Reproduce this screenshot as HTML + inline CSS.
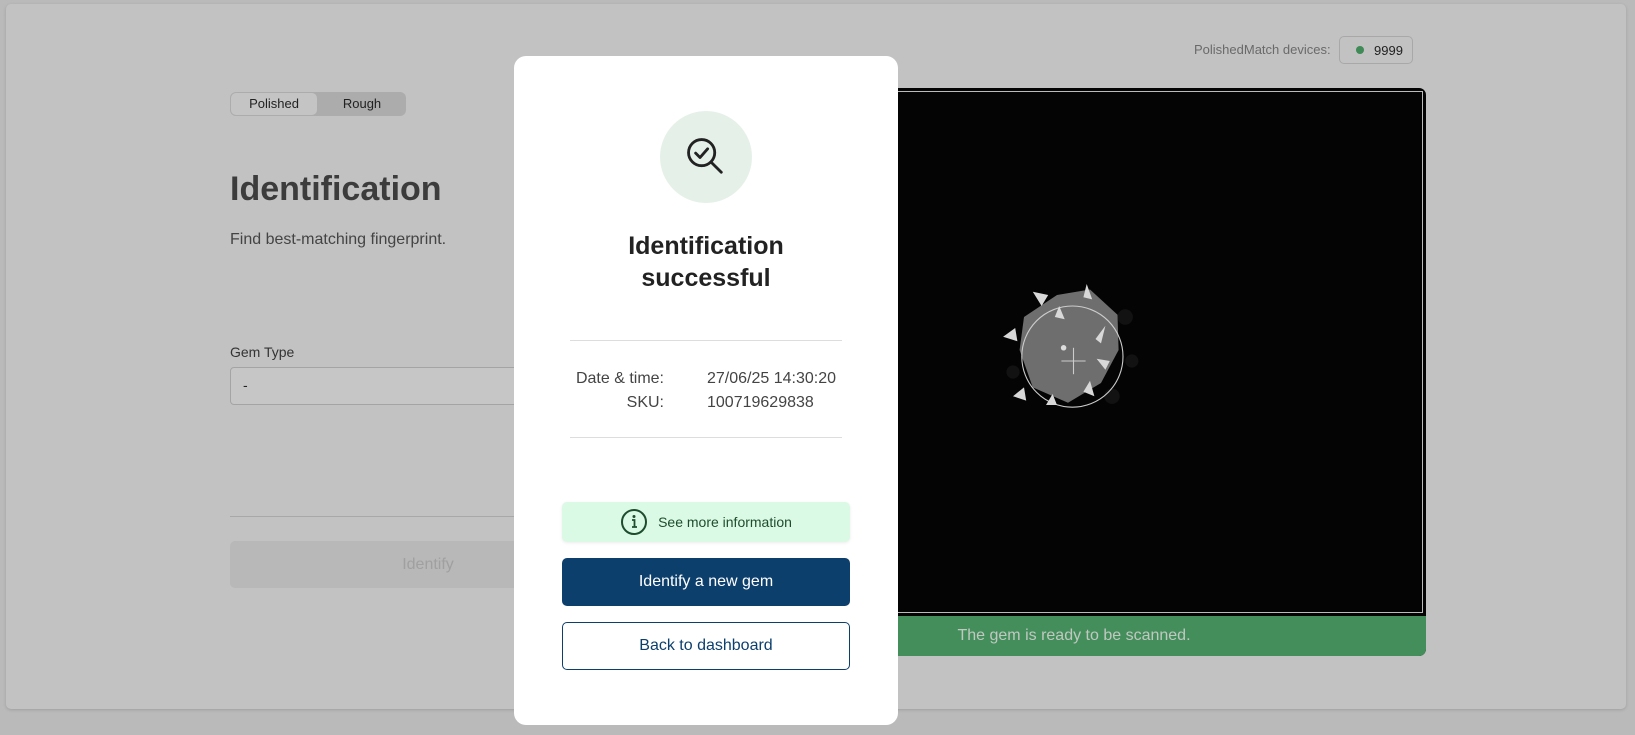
<!DOCTYPE html>
<html><head><meta charset="utf-8"><style>
*{box-sizing:border-box;margin:0;padding:0}
body{width:1635px;height:735px;background:#bababa;font-family:"Liberation Sans",sans-serif;position:relative;overflow:hidden}
.card{position:absolute;left:6px;top:4px;width:1620px;height:705px;background:#c2c2c2;border-radius:5px;box-shadow:0 1px 3px rgba(0,0,0,.15)}
.abs{position:absolute}
.modal{position:absolute;left:514px;top:56px;width:384px;height:669px;background:#fff;border-radius:12px}
.btn{position:absolute;left:48px;width:288px;border-radius:5px;display:flex;align-items:center;justify-content:center;font-size:16px}
</style></head><body>
<div class="card"></div>
<div class="abs" style="left:1194px;top:42px;font-size:13px;color:#6a6a6a">PolishedMatch devices:</div>
<div class="abs" style="left:1339px;top:36px;width:74px;height:28px;border:1px solid #a8a8a8;border-radius:5px;font-size:13px;color:#222;padding:6px 0 0 34px">9999</div>
<div class="abs" style="left:1356px;top:46px;width:8px;height:8px;border-radius:50%;background:#3f8a56"></div>

<div class="abs" style="left:230px;top:92px;width:176px;height:24px;background:#acacac;border-radius:6px"></div>
<div class="abs" style="left:231px;top:93px;width:86px;height:22px;background:#c4c4c4;border-radius:5px;font-size:13px;color:#222;text-align:center;line-height:22px">Polished</div>
<div class="abs" style="left:322px;top:93px;width:80px;height:22px;font-size:13px;color:#222;text-align:center;line-height:22px">Rough</div>
<div class="abs" style="left:230px;top:170px;font-size:34px;font-weight:bold;color:#3c3c3c">Identification</div>
<div class="abs" style="left:230px;top:231px;font-size:16px;color:#444">Find best-matching fingerprint.</div>
<div class="abs" style="left:230px;top:344px;font-size:14px;color:#333">Gem Type</div>
<div class="abs" style="left:230px;top:367px;width:320px;height:38px;border:1px solid #a4a4a4;border-radius:4px;background:#c6c6c6;font-size:14px;color:#222;padding:9px 12px">-</div>
<div class="abs" style="left:230px;top:516px;width:300px;height:1px;background:#a8a8a8"></div>
<div class="abs" style="left:230px;top:541px;width:396px;height:47px;background:#b8b8b8;border-radius:5px;color:#a0a0a0;font-size:16px;text-align:center;line-height:47px">Identify</div>

<div class="abs" style="left:560px;top:88px;width:866px;height:568px;background:#040404;border-radius:7px;overflow:hidden">
  <div class="abs" style="left:3px;top:3px;right:3px;bottom:43px;border:1px solid #bbb"></div>
  <div class="abs" style="left:0;right:0;bottom:0;height:40px;background:#448e5c;color:#c0c8c0;font-size:16px;text-align:center;line-height:40px;padding-left:162px">The gem is ready to be scanned.</div>
  <svg class="abs" style="left:431px;top:185px" width="176" height="165" viewBox="0 0 160 150">
    <g fill="#1c1c1c" opacity=".6"><circle cx="122" cy="40" r="7"/><circle cx="128" cy="80" r="6"/><circle cx="20" cy="90" r="6"/><circle cx="110" cy="112" r="7"/></g>
    <polygon points="60,20 90,15 115,38 116,70 100,100 70,118 38,104 26,70 30,40" fill="#6e6e6e"/>
    <circle cx="74" cy="76" r="46" fill="none" stroke="#ccc" stroke-width="1"/>
    <line x1="64" y1="80" x2="86" y2="80" stroke="#ccc"/><line x1="75" y1="68" x2="75" y2="92" stroke="#ccc"/>
    <circle cx="66" cy="68" r="2.5" fill="#ddd"/>
    <g fill="#d8d8d8">
    <polygon points="38,17 52,20 46,30"/><polygon points="87,10 92,24 84,22"/><polygon points="62,30 67,42 58,40"/>
    <polygon points="11,58 22,50 24,62"/><polygon points="95,60 104,48 100,64"/><polygon points="104,88 96,78 108,80"/>
    <polygon points="50,120 56,110 60,120"/><polygon points="90,98 94,112 84,108"/><polygon points="20,112 30,104 32,116"/>
    </g>
  </svg>
</div>

<div class="modal">
  <div class="abs" style="left:146px;top:55px;width:92px;height:92px;border-radius:50%;background:#e5f1e8"></div>
  <svg class="abs" style="left:168px;top:77px" width="48" height="48" viewBox="0 0 44 44" fill="none" stroke="#222" stroke-width="2.6" stroke-linecap="round" stroke-linejoin="round">
    <circle cx="18" cy="18" r="12"/><path d="M12.5 18.5l4 4 7-8"/><path d="M27 27l9 9"/>
  </svg>
  <div class="abs" style="left:0;width:384px;top:174px;text-align:center;font-size:25px;font-weight:bold;color:#222;line-height:32px">Identification<br>successful</div>
  <div class="abs" style="left:56px;top:284px;width:272px;height:1px;background:#ddd"></div>
  <div class="abs" style="left:0;width:150px;top:311px;text-align:right;font-size:16px;color:#444;line-height:24px">Date &amp; time:<br>SKU:</div>
  <div class="abs" style="left:193px;top:311px;font-size:16px;color:#444;line-height:24px">27/06/25 14:30:20<br>100719629838</div>
  <div class="abs" style="left:56px;top:381px;width:272px;height:1px;background:#ddd"></div>
  <div class="btn" style="top:446px;height:40px;background:#dbfae5;color:#1e4d2e;font-size:14px;box-shadow:0 1px 3px rgba(0,0,0,.08)">
    <svg width="28" height="28" viewBox="0 0 28 28" style="margin-right:10px"><circle cx="14" cy="14" r="12" fill="none" stroke="#1e4d2e" stroke-width="2"/><circle cx="14" cy="8.5" r="1.5" fill="#1e4d2e"/><path d="M12 12h2.5v7M12 19h5" stroke="#1e4d2e" stroke-width="1.8" fill="none"/></svg>See more information</div>
  <div class="btn" style="top:502px;height:48px;background:#0d3f6d;color:#fff">Identify a new gem</div>
  <div class="btn" style="top:566px;height:48px;border:1.5px solid #0d3f6d;color:#0d3f6d">Back to dashboard</div>
</div>
</body></html>
